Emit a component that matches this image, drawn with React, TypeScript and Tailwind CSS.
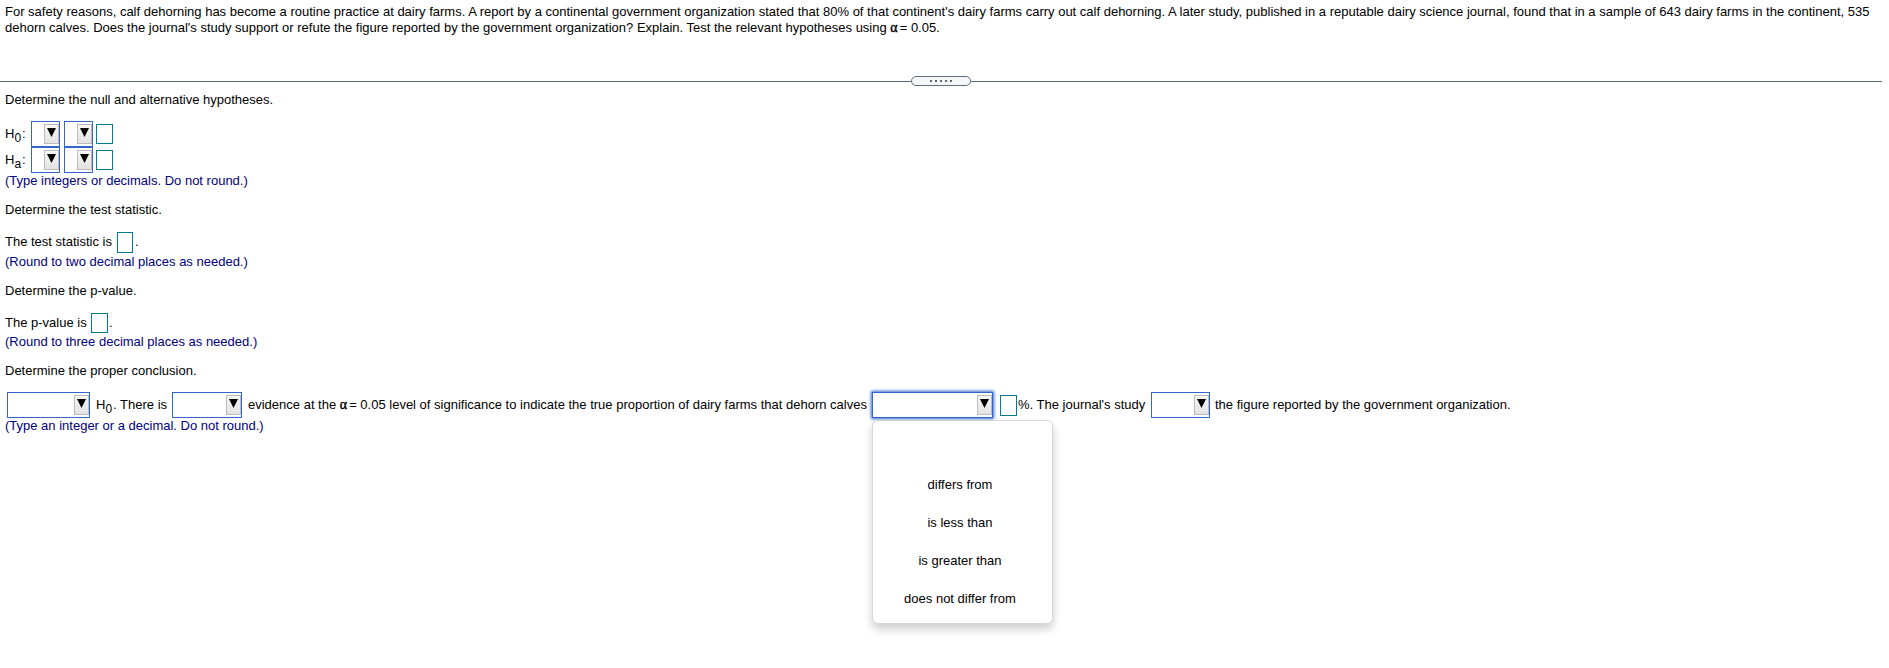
import type { ReactNode } from "react";

function Line({ children, className = "" }: { children: ReactNode; className?: string }) {
  return <div className={`flex h-4 items-start whitespace-nowrap leading-4 ${className}`}>{children}</div>;
}

function Select({ className = "", active = false }: { className?: string; active?: boolean }) {
  return (
    <button
      type="button"
      className={`flex h-[26px] shrink-0 items-start justify-end border border-[#3366cc] bg-white pt-0.5 ${
        active ? "shadow-[0_0_3px_1px_#3366cc]" : ""
      } ${className}`}
    >
      <span className="flex h-5 w-[15px] justify-center border border-[#bcbcbc] bg-linear-to-b from-[#f7f7f7] to-[#e3e3e3] pt-[3px]">
        <svg width="9" height="9" viewBox="0 0 9 9" className="shrink-0">
          <path d="M0 0H9L4.5 9Z" fill="#000" />
        </svg>
      </span>
    </button>
  );
}

function Answer({ className = "" }: { className?: string }) {
  return <span className={`block shrink-0 border border-[#007a99] bg-white ${className}`} />;
}

function Sub({ children }: { children: ReactNode }) {
  return <span className="relative top-1 mr-px text-[12px] leading-none">{children}</span>;
}

function AlphaEquals() {
  return (
    <>
      <span className="font-['Liberation_Serif',serif] text-[14px] leading-none [-webkit-text-stroke:0.4px_black]">α</span>
      <span className="ml-0.5">=</span>
    </>
  );
}

function Hypothesis({ sub }: { sub: string }) {
  return (
    <div className="flex h-[26px] items-start">
      <span className="w-[26px] pt-[5px] leading-4">
        H<Sub>{sub}</Sub>:
      </span>
      <Select className="w-[29px]" />
      <Select className="ml-1 w-[29px]" />
      <Answer className="mt-[3px] ml-[3px] h-5 w-[17px]" />
    </div>
  );
}

const options = ["differs from", "is less than", "is greater than", "does not differ from"];

export default function App() {
  return (
    <main className="h-[668px] w-[1889px] overflow-hidden bg-white font-['Liberation_Sans',Arial,sans-serif] text-[13px] text-black">
      <section className="h-[73px] pt-1 pl-[5px]">
        <Line>
          For safety reasons, calf dehorning has become a routine practice at dairy farms. A report by a continental
          government organization stated that 80% of that continent's dairy farms carry out calf dehorning. A later
          study, published in a reputable dairy science journal, found that in a sample of 643 dairy farms in the
          continent, 535
        </Line>
        <Line>
          <span>
            dehorn calves. Does the journal's study support or refute the figure reported by the government
            organization? Explain. Test the relevant hypotheses using <AlphaEquals /> 0.05.
          </span>
        </Line>
      </section>

      <div className="flex h-4 w-[1882px] items-start pt-[3px]">
        <span className="mt-[5px] h-px w-[911px] bg-[#5b6f80]" />
        <span className="flex h-2.5 w-[60px] items-center justify-center gap-[3px] rounded-full border border-[#5b6f80] bg-[#f4f6f7]">
          {[0, 1, 2, 3, 4].map((dot) => (
            <span key={dot} className="size-0.5 bg-[#666666]" />
          ))}
        </span>
        <span className="mt-[5px] h-px flex-1 bg-[#5b6f80]" />
      </div>

      <section className="pt-[3px] pl-[5px]">
        <Line>Determine the null and alternative hypotheses.</Line>
        <div className="pt-[13px]">
          <Hypothesis sub="0" />
          <Hypothesis sub="a" />
        </div>
        <Line className="text-[#000080]">(Type integers or decimals. Do not round.)</Line>

        <Line className="mt-[13px]">Determine the test statistic.</Line>
        <Line className="mt-4">
          <span className="w-[112px]">The test statistic is</span>
          <Answer className="-mt-0.5 h-[21px] w-4" />
          <span className="ml-0.5">.</span>
        </Line>
        <Line className="mt-1 text-[#000080]">(Round to two decimal places as needed.)</Line>

        <Line className="mt-[13px]">Determine the p-value.</Line>
        <Line className="mt-4">
          <span className="w-[86px]">The p-value is</span>
          <Answer className="-mt-0.5 h-5 w-[17px]" />
          <span className="ml-px">.</span>
        </Line>
        <Line className="mt-[3px] text-[#000080]">(Round to three decimal places as needed.)</Line>

        <Line className="mt-[13px]">Determine the proper conclusion.</Line>
        <div className="flex h-[42px] items-start whitespace-nowrap pt-[13px] leading-4">
          <Select className="ml-0.5 w-[83px]" />
          <span className="w-[82px] pt-[5px] pl-1.5">
            H<Sub>0</Sub>. There is
          </span>
          <Select className="w-[70px]" />
          <span className="w-[630px] pt-[5px] pl-1.5">
            evidence at the <AlphaEquals /> 0.05 level of significance to indicate the true proportion of dairy farms
            that dehorn calves
          </span>
          <div className="relative shrink-0">
            <Select className="w-[121px]" active />
            <ul className="absolute top-7 left-0 flex h-[204px] w-[181px] flex-col rounded-md border border-[#d6d6d6] bg-white pt-[45px] pr-[5px] text-center shadow-[0_5px_10px_rgba(0,0,0,0.2)]">
              {options.map((option) => (
                <li key={option} className="h-[38px] pt-[11px]">
                  {option}
                </li>
              ))}
            </ul>
          </div>
          <Answer className="mt-[3px] ml-[7px] h-[21px] w-[17px]" />
          <span className="w-[134px] pt-[5px] pl-px">%. The journal's study</span>
          <Select className="w-[59px]" />
          <span className="pt-[5px] pl-[5px]">the figure reported by the government organization.</span>
        </div>
        <Line className="-mt-[3px] text-[#000080]">(Type an integer or a decimal. Do not round.)</Line>
      </section>
    </main>
  );
}
